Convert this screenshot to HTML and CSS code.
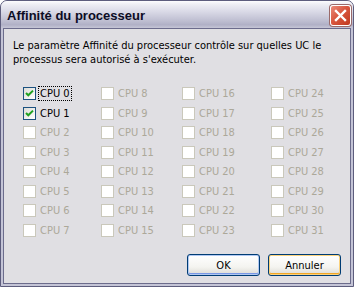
FILE: index.html
```html
<!DOCTYPE html>
<html lang="fr">
<head>
    <meta charset="utf-8" />
    <title>Affinité du processeur</title>
    <link rel="stylesheet" href="styles.css">
</head>
<body>
  <div class="window">
    <div class="titlebar">
      <span class="title">Affinité du processeur</span>
      <div class="close-btn">
        <svg width="13" height="13" viewBox="0 0 13 13"><path d="M2 2 L11 11 M11 2 L2 11" stroke="#fff" stroke-width="2.4" stroke-linecap="square"/></svg>
      </div>
    </div>
    <div class="client">
      <p class="intro">Le paramètre Affinité du processeur contrôle sur quelles UC le<br/>processus sera autorisé à s'exécuter.</p>
      <div class="cpu-grid" id="grid"></div>
      <div class="spacer"></div>
      <div class="buttons">
        <div class="btn btn-default">OK</div>
        <div class="btn btn-hover">Annuler</div>
      </div>
    </div>
  </div>
  <script>
    var grid = document.getElementById('grid');
    var tick = '<svg width="9" height="9" viewBox="0 0 9 9"><path d="M1 4 L3.3 6.3 L8 1.6" fill="none" stroke="#21a121" stroke-width="2"/></svg>';
    for (var r = 0; r < 8; r++) {
      for (var c = 0; c < 4; c++) {
        var n = c * 8 + r;
        var on = n < 2;
        var cell = document.createElement('div');
        cell.className = 'cpu' + (on ? '' : ' disabled');
        cell.innerHTML = '<span class="box">' + (on ? tick : '') + '</span>' +
          '<span class="label' + (n === 0 ? ' focus' : '') + '">CPU ' + n + '</span>';
        grid.appendChild(cell);
      }
    }
  </script>
</body>
</html>
```

FILE: styles.css
```css
body{
    margin: 0;
    background: #fff;
    font-family: "DejaVu Sans Condensed", "DejaVu Sans", Tahoma, sans-serif;
    font-size: 11px;
    color: #000;
}

.window{
    width: 354px;
    height: 287px;
    box-sizing: border-box;
    border: 1px solid #5d5d7d;
    border-radius: 7px 7px 0 0;
    background: #c4c4d6;
    padding: 0 2px 2px 2px;
    display: flex;
    flex-direction: column;
    overflow: hidden;
}

.titlebar{
    height: 27px;
    margin: 0 -2px;
    flex: none;
    display: flex;
    align-items: center;
    justify-content: space-between;
    padding: 0 2px 0 6px;
    background: linear-gradient(#fdfdfe 0%, #eeeef4 12%, #d9d9e6 40%, #bdbdd0 75%, #b0b0c6 88%, #c6c6d6 100%);
}

.title{
    font-family: "Liberation Sans", Arial, sans-serif;
    font-weight: bold;
    font-size: 13px;
    color: #0c0c24;
    padding-top: 2px;
}

.close-btn{
    width: 19px;
    height: 19px;
    border: 1px solid #fff;
    border-radius: 3px;
    background: linear-gradient(135deg, #e98c7c 0%, #d9573f 45%, #c0391f 100%);
    box-shadow: 0 0 0 1px #9a6a6a;
    display: flex;
    align-items: center;
    justify-content: center;
    margin-top: 2px;
}

.client{
    flex: 1;
    display: flex;
    flex-direction: column;
    background: #e0dfe3;
    border: 1px solid #6c6c8c;
}

.intro{
    margin: 10px 0 0 9px;
    line-height: 14px;
}

.cpu-grid{
    display: grid;
    grid-template-columns: 78px 81px 89px 80px;
    grid-auto-rows: 19.5px;
    margin: 17px 0 0 19px;
}

.cpu{
    display: flex;
    align-items: center;
}

.box{
    width: 11px;
    height: 11px;
    border: 1px solid #1c5180;
    background: linear-gradient(135deg, #dcdcd7, #fff);
    display: flex;
    align-items: center;
    justify-content: center;
    margin-right: 2px;
}

.label{
    padding: 0 1px;
    border: 1px dotted transparent;
    line-height: 13px;
}

.label.focus{
    border-color: #000;
}

.disabled .box{
    border-color: #cac8bb;
    background: #fff;
}

.disabled .label{
    color: #aca899;
}

.spacer{
    flex: 1;
}

.buttons{
    display: flex;
    justify-content: flex-end;
    gap: 8px;
    padding: 0 9px 7px 0;
}

.btn{
    width: 71px;
    height: 20px;
    border: 1px solid #003c74;
    border-radius: 3px;
    background: linear-gradient(#fff, #f4f4f0 60%, #dcdad4);
    display: flex;
    align-items: center;
    justify-content: center;
}

.btn-default{
    box-shadow: inset 0 0 0 1px #b0c8f2, inset 0 -1px 0 1px #7a98e6;
}

.btn-hover{
    box-shadow: inset 0 0 0 1px #fbd27c, inset 0 -1px 0 1px #f2a626;
}
```
